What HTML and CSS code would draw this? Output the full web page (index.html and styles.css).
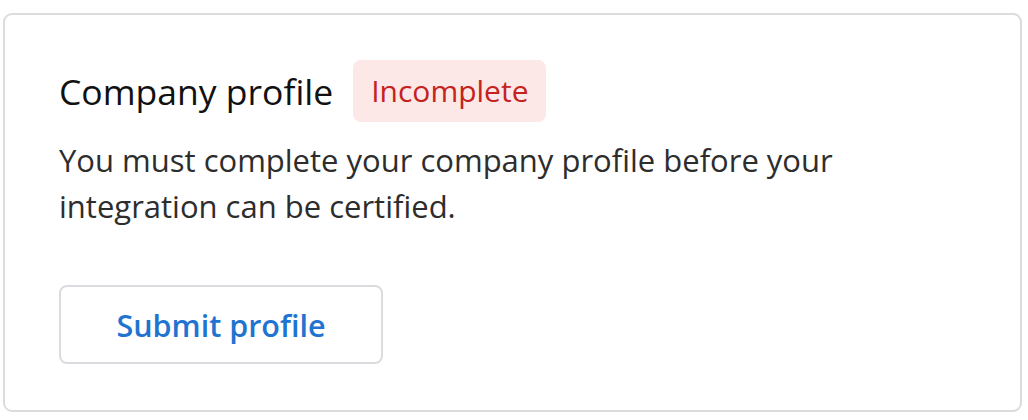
FILE: index.html
```html
<!DOCTYPE html>
<html lang="en">
<head>
  <meta charset="UTF-8">
  <title>Company profile</title>
  <link rel="stylesheet" href="styles.css">
</head>
<body>
  <div class="card">
    <div class="card-head">
      <h2 class="card-title">Company profile</h2>
      <span class="badge">Incomplete</span>
    </div>
    <p class="card-text">You must complete your company profile before your integration can be certified.</p>
    <button class="btn-outline">Submit profile</button>
  </div>
</body>
</html>
```

FILE: styles.css
```css
body {
  margin: 0;
  background: #ffffff;
  font-family: "Open Sans", sans-serif;
}
.card {
  box-sizing: border-box;
  width: 1019px;
  height: 399px;
  margin: 13px 0 0 3px;
  padding: 45px 54px 0 54px;
  border: 2px solid #dcdcdc;
  border-radius: 9px;
}
.card-head {
  display: flex;
  align-items: center;
  gap: 20px;
}
.card-title {
  margin: 0;
  font-size: 35.5px;
  font-weight: 400;
  color: #111111;
}
.badge {
  padding: 12px 18px;
  border-radius: 8px;
  background-color: #fce8e6;
  color: #c5221f;
  font-size: 30px;
  line-height: 38px;
}
.card-text {
  margin: 15px 0 0 0;
  max-width: 800px;
  font-size: 31px;
  line-height: 46px;
  color: #2d2d2d;
}
.btn-outline {
  margin-top: 56px;
  width: 324px;
  height: 79px;
  border: 2px solid #dadce0;
  border-radius: 8px;
  background: #ffffff;
  color: #1f74d1;
  font-family: inherit;
  font-size: 30.5px;
  font-weight: 600;
  cursor: pointer;
}
```
